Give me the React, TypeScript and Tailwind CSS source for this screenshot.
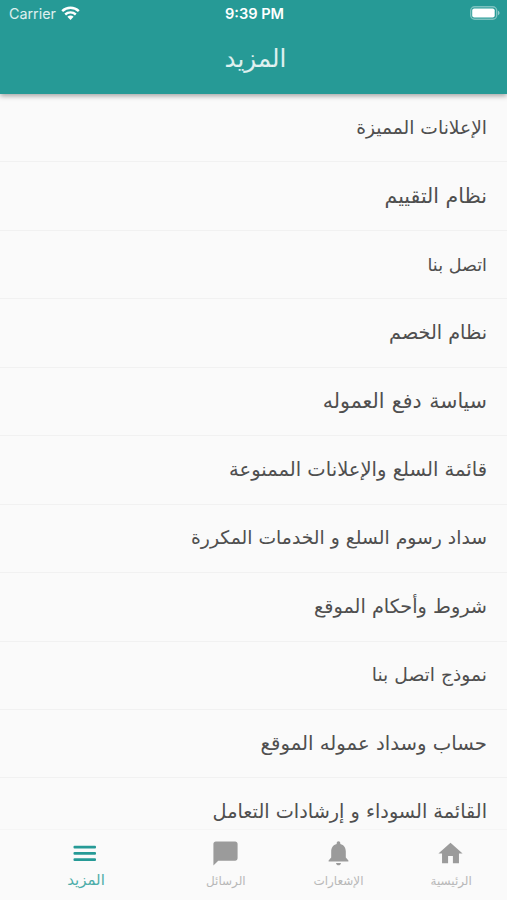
import { MdChatBubble, MdHome } from "react-icons/md";

const menuItems = [
  { title: "الإعلانات المميزة", size: "text-[18.7px]" },
  { title: "نظام التقييم", size: "text-[20.5px]" },
  { title: "اتصل بنا", size: "text-[17.6px]" },
  { title: "نظام الخصم", size: "text-[19.2px]" },
  { title: "سياسة دفع العموله", size: "text-[20.5px] [word-spacing:1px]" },
  { title: "قائمة السلع والإعلانات الممنوعة", size: "text-[19.55px]" },
  { title: "سداد رسوم السلع و الخدمات المكررة", size: "text-[18.8px]" },
  { title: "شروط وأحكام الموقع", size: "text-[19.3px]" },
  { title: "نموذج اتصل بنا", size: "text-[18.7px]" },
  { title: "حساب وسداد عموله الموقع", size: "text-[19.7px]" },
  { title: "القائمة السوداء و إرشادات التعامل", size: "text-[19.25px]" },
];

function BellIcon({ size }: { size: number }) {
  return (
    <svg width={size} height={size} viewBox="0 0 29 29" fill="currentColor">
      <path d="M14.5 2.2C15.6 2.2 16.3 3 16.3 4.1V5C20 5.9 21.8 8.8 21.8 12.5V18.5L24.4 21.6V22.6H4.6V21.6L7.2 18.5V12.5C7.2 8.8 9 5.9 12.7 5V4.1C12.7 3 13.4 2.2 14.5 2.2Z" />
      <path d="M12 24H17C16.7 25.5 15.8 26.3 14.5 26.3S12.3 25.5 12 24Z" />
    </svg>
  );
}

function MenuIcon({ size }: { size: number }) {
  return (
    <svg width={size} height={size} viewBox="0 0 29 29" fill="currentColor">
      <rect x="3.5" y="6.8" width="22.5" height="2.7" rx="1" />
      <rect x="3.5" y="13" width="22.5" height="2.7" rx="1" />
      <rect x="3.5" y="19.2" width="22.5" height="2.7" rx="1" />
    </svg>
  );
}

const tabs = [
  { label: "الرئيسية", icon: MdHome },
  { label: "الإشعارات", icon: BellIcon },
  { label: "الرسائل", icon: MdChatBubble },
  { label: "المزيد", icon: MenuIcon, active: true },
];

function StatusBar() {
  return (
    <div
      dir="ltr"
      className="grid h-7 grid-cols-3 items-center pl-[9px] pr-[7px] font-['Inter','Liberation_Sans',sans-serif] text-[14.3px] leading-5 text-white"
    >
      <div className="flex items-center gap-[5px]">
        <span className="text-white/85">Carrier</span>
        <svg className="-mt-0.5" width="19" height="15" viewBox="0 0 19 15" fill="none">
          <path d="M1.2 5.2C5.9 .7 13.1 .7 17.8 5.2" stroke="currentColor" strokeWidth="2.5" />
          <path d="M4.2 8.5C7.2 5.7 11.8 5.7 14.8 8.5" stroke="currentColor" strokeWidth="2.4" />
          <path d="M6.4 10.8C8.2 9.2 10.8 9.2 12.6 10.8L9.5 14Z" fill="currentColor" />
        </svg>
      </div>
      <span className="text-center text-[14.6px] font-semibold">9:39 PM</span>
      <svg className="-mt-0.5 justify-self-end" width="30" height="14" viewBox="0 0 30 14">
        <rect x=".7" y=".7" width="26" height="12.6" rx="4" fill="none" stroke="white" strokeOpacity=".4" strokeWidth="1.4" />
        <rect x="2.2" y="2.5" width="22.5" height="9" rx="2" fill="white" />
        <path d="M28 4.8C30 5.5 30 8.5 28 9.2Z" fill="white" fillOpacity=".5" />
      </svg>
    </div>
  );
}

export default function App() {
  return (
    <div
      dir="rtl"
      className="flex h-[900px] w-full flex-col overflow-hidden bg-[#fafafa] font-['DejaVu_Sans',sans-serif]"
    >
      <header className="relative z-10 h-[94px] shrink-0 bg-[#269a96] shadow-[0_2px_5px_rgba(0,0,0,0.35)]">
        <StatusBar />
        <h1 className="pl-1 text-center text-[24.6px] leading-[61px] text-white/85">المزيد</h1>
      </header>

      <ul className="min-h-0 flex-1 overflow-hidden">
        {menuItems.map(({ title, size }) => (
          <li
            key={title}
            className="flex h-[68.45px] items-center border-b border-[#f1f1f1] px-5 text-[#4f4f4f]"
          >
            <span className={`whitespace-nowrap leading-7 ${size}`}>{title}</span>
          </li>
        ))}
      </ul>

      <nav className="z-10 flex h-[71px] shrink-0 border-t border-[#f5f5f5] bg-[#fafafa]">
        {tabs.map(({ label, icon: Icon, active }) => (
          <button
            key={label}
            className={
              active
                ? "flex flex-[3] flex-col items-center pt-[9px] text-[#269a96]"
                : "flex flex-[2] flex-col items-center pt-[9px] text-[#9b9b9b]"
            }
          >
            <Icon size={29} />
            <span
              className={
                active
                  ? "pl-[3px] text-[15px] leading-6 text-[#4dada9]"
                  : "pl-px text-[12px] leading-[27px] text-[#b8b8b8]"
              }
            >
              {label}
            </span>
          </button>
        ))}
      </nav>
    </div>
  );
}
